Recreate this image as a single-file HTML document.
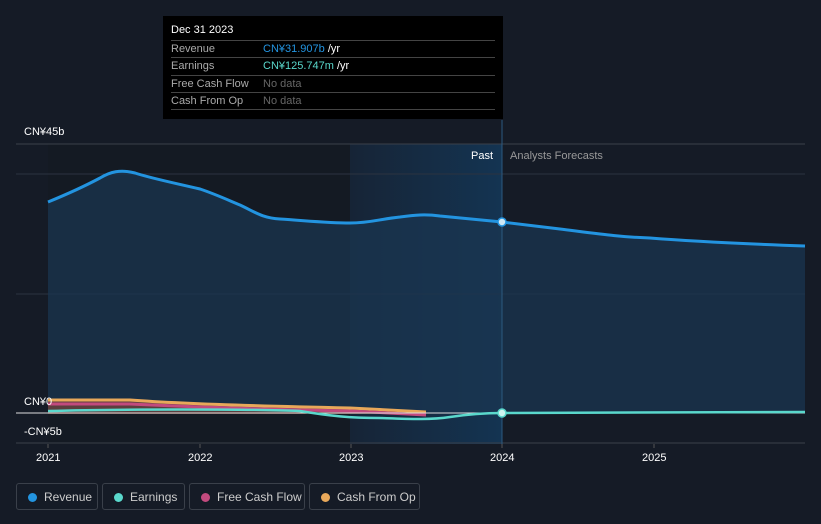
<!DOCTYPE html>
<html><head><meta charset="utf-8"><style>
body{margin:0;background:#151b26;font-family:"Liberation Sans",sans-serif;}
.wrap{position:relative;width:821px;height:524px;overflow:hidden;background:#151b26}
.t{position:absolute;font-size:11px;color:#fff}
.tip{position:absolute;left:163px;top:16px;width:340px;height:103px;background:#000}
.tip .row{position:absolute;left:8px;width:324px;border-top:1px solid #444;font-size:11px;height:17px;line-height:17px}
.tip .l{color:#aaa;position:absolute;left:0}
.tip .v{position:absolute;left:92px;color:#fff}
.leg{position:absolute;top:483px;height:27px;border:1px solid #3a404a;border-radius:3px;font-size:12px;color:#ccc;line-height:27px;box-sizing:border-box}
.leg i{position:absolute;left:11px;top:9px;width:9px;height:9px;border-radius:50%}
.leg span{position:absolute;left:27px}
</style></head><body><div class="wrap">
<svg width="821" height="524" style="position:absolute;left:0;top:0">
<defs><linearGradient id="g" x1="0" y1="0" x2="1" y2="0"><stop offset="0" stop-color="#162436"/><stop offset="1" stop-color="#143452"/></linearGradient></defs>
<rect x="48" y="144" width="302" height="300" fill="#141a23"/>
<rect x="350" y="144" width="152" height="300" fill="url(#g)"/>
<line x1="16" y1="144" x2="805" y2="144" stroke="#3a404a"/>
<line x1="16" y1="174" x2="805" y2="174" stroke="#2c3340"/>
<line x1="16" y1="294" x2="805" y2="294" stroke="#2c3340"/>
<line x1="16" y1="443" x2="805" y2="443" stroke="#3a404a"/>
<path d="M48,202 C70,193 85,186 100,178 C110,172 120,169 135,173 C150,178 170,182 200,189 C215,194 228,200 240,205 C255,212 262,218 280,219 C310,221 330,223 350,223 C370,223 380,219 400,217 C415,215 425,214 440,216 C460,218 480,220 502,222 L560,229 C600,234 620,237 650,238 C700,242 750,244 805,246 L805,413 L48,413 Z" fill="#1a3650" opacity="0.75"/>
<path d="M48,202 C70,193 85,186 100,178 C110,172 120,169 135,173 C150,178 170,182 200,189 C215,194 228,200 240,205 C255,212 262,218 280,219 C310,221 330,223 350,223 C370,223 380,219 400,217 C415,215 425,214 440,216 C460,218 480,220 502,222 L560,229 C600,234 620,237 650,238 C700,242 750,244 805,246" fill="none" stroke="#2394e0" stroke-width="3"/>
<line x1="502" y1="120" x2="502" y2="444" stroke="#2c5a80"/>
<path d="M48,400 L130,400 C170,403 250,406 350,408 L426,412 L426,414 L48,414 Z" fill="#8a4a3a" opacity="0.6"/>
<path d="M48,400 L130,400 C170,403 250,406 350,408 L426,412" fill="none" stroke="#e8a85a" stroke-width="3"/>
<path d="M48,404 L130,404 C170,406 250,409 350,411 L426,415" fill="none" stroke="#c24a7e" stroke-width="3"/>
<line x1="16" y1="413" x2="805" y2="413" stroke="#ddd" stroke-width="1"/>
<path d="M48,411 C120,409 250,409 300,411 C330,416 350,418 380,418 C410,419 430,420 450,417 C470,414 490,413 502,413 L805,412" fill="none" stroke="#5ad8cc" stroke-width="2.5"/>
<circle cx="502" cy="222" r="4" fill="#cfe8f5" stroke="#2394e0" stroke-width="1.5"/>
<circle cx="502" cy="413" r="4" fill="#cff5f0" stroke="#5ad8cc" stroke-width="1.5"/>
<g stroke="#555"><line x1="48" y1="444" x2="48" y2="448"/><line x1="200" y1="444" x2="200" y2="448"/><line x1="351" y1="444" x2="351" y2="448"/><line x1="502" y1="444" x2="502" y2="448"/><line x1="654" y1="444" x2="654" y2="448"/></g>
</svg>
<div class="t" style="left:24px;top:126px">CN¥45b</div>
<div class="t" style="left:24px;top:396px">CN¥0</div>
<div class="t" style="left:24px;top:426px">-CN¥5b</div>
<div class="t" style="left:36px;top:452px">2021</div>
<div class="t" style="left:188px;top:452px">2022</div>
<div class="t" style="left:339px;top:452px">2023</div>
<div class="t" style="left:490px;top:452px">2024</div>
<div class="t" style="left:642px;top:452px">2025</div>
<div class="t" style="left:471px;top:150px">Past</div>
<div class="t" style="left:510px;top:150px;color:#999">Analysts Forecasts</div>
<div class="tip">
<div style="position:absolute;left:8px;top:8px;color:#fff;font-size:11px">Dec 31 2023</div>
<div class="row" style="top:24px"><span class="l">Revenue</span><span class="v"><b style="font-weight:normal;color:#2394e0">CN¥31.907b</b> /yr</span></div>
<div class="row" style="top:41px"><span class="l">Earnings</span><span class="v"><b style="font-weight:normal;color:#5ad8cc">CN¥125.747m</b> /yr</span></div>
<div class="row" style="top:59px"><span class="l">Free Cash Flow</span><span class="v" style="color:#666">No data</span></div>
<div class="row" style="top:76px"><span class="l">Cash From Op</span><span class="v" style="color:#666">No data</span></div>
<div class="row" style="top:93px;height:0"></div>
</div>
<div class="leg" style="left:16px;width:82px"><i style="background:#2394e0"></i><span>Revenue</span></div>
<div class="leg" style="left:102px;width:83px"><i style="background:#5ad8cc"></i><span>Earnings</span></div>
<div class="leg" style="left:189px;width:116px"><i style="background:#c24a7e"></i><span>Free Cash Flow</span></div>
<div class="leg" style="left:309px;width:111px"><i style="background:#e8a85a"></i><span>Cash From Op</span></div>
</div></body></html>
